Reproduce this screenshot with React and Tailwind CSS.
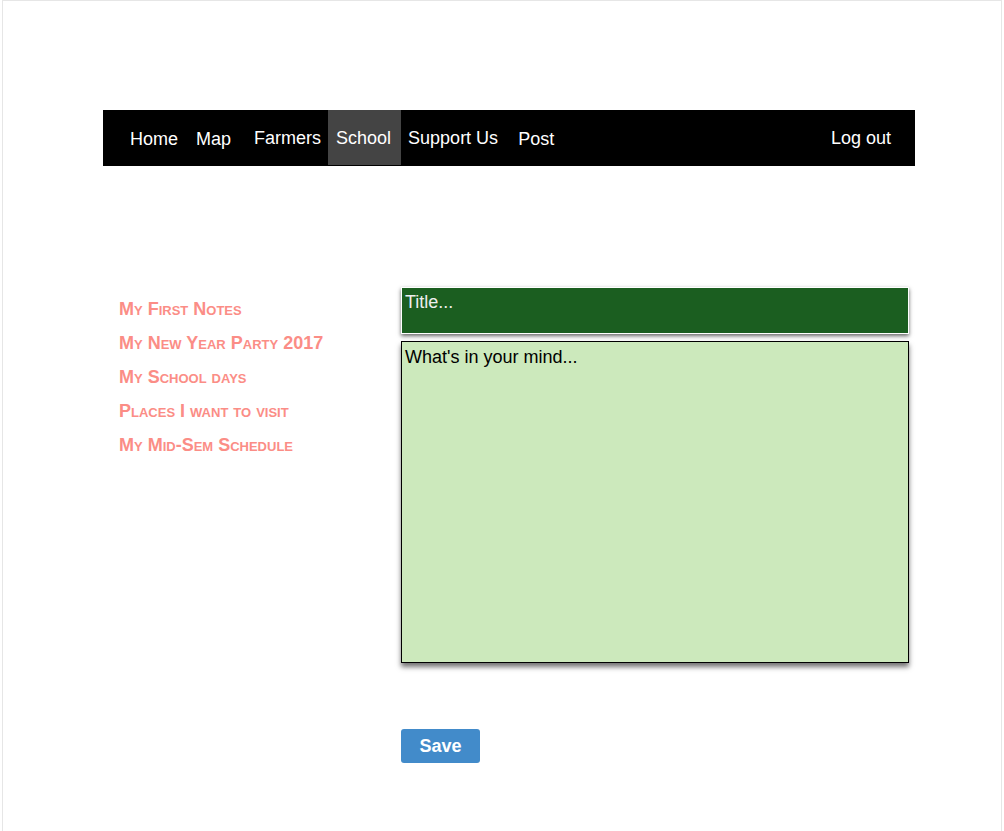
import React from "react";

const notes = [
  "My First Notes",
  "My New Year Party 2017",
  "My School days",
  "Places I want to visit",
  "My Mid-Sem Schedule",
];

const navItems = [
  { label: "Home", cls: "ml-[27px] mt-[2px]" },
  { label: "Map", cls: "ml-[18px] mt-[2px]" },
  { label: "Farmers", cls: "ml-[23px]" },
  { label: "School", cls: "ml-[7px] pl-2 pr-[10px] bg-[#444444]" },
  { label: "Support Us", cls: "ml-[7px]" },
  { label: "Post", cls: "ml-[20px] mt-[2px]" },
];

export default function App() {
  return (
    <div className="w-[1000px] mx-auto min-h-[860px] border border-[#e6e6e6] bg-white font-['Liberation_Sans',Arial,sans-serif]">
      {/* Top navigation */}
      <nav className="mt-[109px] ml-[100px] w-[812px] h-[56px] pb-[1px] bg-black flex items-stretch text-[18px] text-white">
        {navItems.map((item) => (
          <a
            key={item.label}
            href="#"
            className={`flex items-center leading-none ${item.cls}`}
          >
            {item.label}
          </a>
        ))}
        <a href="#" className="ml-auto mr-[24px] flex items-center leading-none">
          Log out
        </a>
      </nav>

      <div className="flex mt-[121px]">
        {/* Notes list */}
        <ul className="ml-[116px] w-[282px] pt-[12px] flex flex-col gap-[13px]">
          {notes.map((n) => (
            <li key={n} className="leading-[20px]">
              <a
                href="#"
                className="text-[18px] leading-[20px] font-bold text-[#fb8d86] [font-variant:small-caps]"
              >
                {n}
              </a>
            </li>
          ))}
        </ul>

        {/* Editor */}
        <div className="w-[508px] flex flex-col">
          <div className="h-[47px] bg-[#1b5e20] border border-white shadow-[0_2px_4px_rgba(0,0,0,0.6)] px-[3px] pt-[4px] text-[18px] leading-[20px] text-[#eeeeee]">
            Title...
          </div>
          <div className="mt-[7px] h-[322px] bg-[#cce9bc] border border-black shadow-[0_4px_5px_rgba(0,0,0,0.55)] px-[3px] pt-[5px] text-[18px] leading-[20px] text-black">
            What's in your mind...
          </div>
          <button className="mt-[66px] w-[79px] h-[34px] rounded-[3px] bg-[#428bca] text-white font-bold text-[18px]">
            Save
          </button>
        </div>
      </div>
    </div>
  );
}
